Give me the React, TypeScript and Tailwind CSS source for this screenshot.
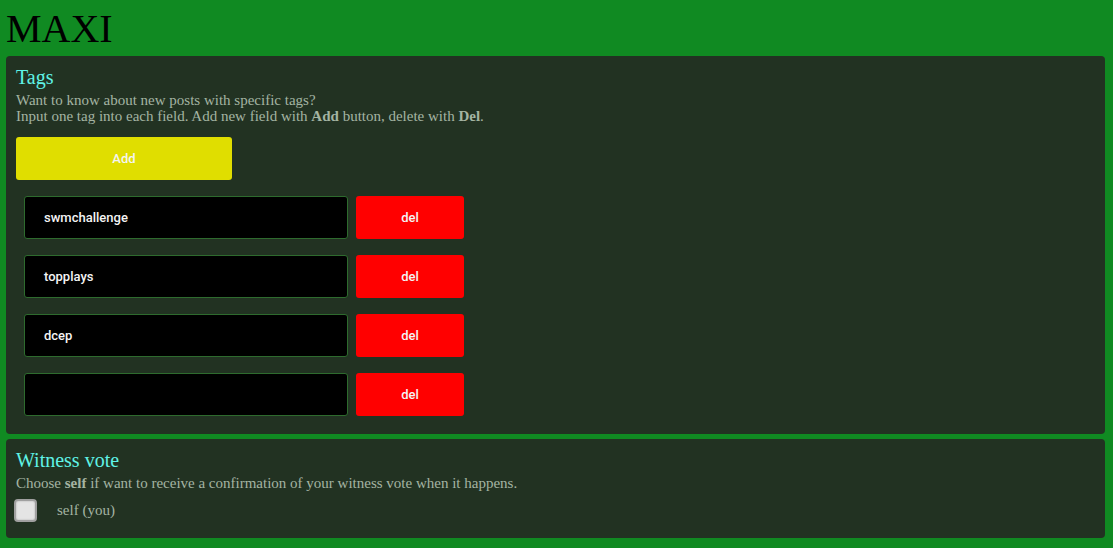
import React from "react";

const serif = { fontFamily: '"Liberation Serif", "Times New Roman", serif' };
const sans = { fontFamily: 'Roboto, "Liberation Sans", Arial, sans-serif' };

function TagRow({ value }: { value: string }) {
  return (
    <div className="flex gap-[8px] ml-[8px]">
      <div
        className="w-[324px] h-[43px] bg-black border border-[#2e6b2e] rounded-[3px] pl-[19px] flex items-center text-[#f4f4f4] text-[13px] font-medium"
        style={sans}
      >
        {value}
      </div>
      <div
        className="w-[108px] h-[43px] bg-[#ff0000] rounded-[3px] flex items-center justify-center text-[#f4f4f4] text-[13px] font-medium"
        style={sans}
      >
        del
      </div>
    </div>
  );
}

export default function App() {
  const tags = ["swmchallenge", "topplays", "dcep", ""];
  return (
    <div className="min-h-screen bg-[#108a22] pt-[6px] pb-[10px]" style={serif}>
      <h1 className="ml-[6px] text-[40px] leading-[45px] mb-[5px] text-black font-normal">MAXI</h1>
      <div className="ml-[6px] mr-[8px] bg-[#223222] rounded-[4px] pt-[10px] px-[10px] pb-[18px]">
        <div className="text-[20px] leading-[23px] text-[#5ff3e6]">Tags</div>
        <div className="mt-[3px] text-[15px] leading-[16px] text-[#a4b4a2]">
          <div>Want to know about new posts with specific tags?</div>
          <div>
            Input one tag into each field. Add new field with <b>Add</b> button, delete with <b>Del</b>.
          </div>
        </div>
        <div
          className="mt-[13px] w-[216px] h-[43px] bg-[#e0de00] rounded-[3px] flex items-center justify-center text-[#f4f4f4] text-[13px] font-medium"
          style={sans}
        >
          Add
        </div>
        <div className="mt-[16px] flex flex-col gap-[16px]">
          {tags.map((t, i) => (
            <TagRow key={i} value={t} />
          ))}
        </div>
      </div>
      <div className="mt-[5px] ml-[6px] mr-[8px] bg-[#223222] rounded-[4px] pt-[10px] px-[10px] pb-[16px]">
        <div className="text-[20px] leading-[23px] text-[#5ff3e6]">Witness vote</div>
        <div className="mt-[3px] text-[15px] leading-[16px] text-[#a4b4a2]">
          Choose <b>self</b> if want to receive a confirmation of your witness vote when it happens.
        </div>
        <div className="mt-[8px] flex items-center">
          <div className="-ml-[2px] w-[23px] h-[23px] rounded-[4px] bg-[#e4e4e4] border-2 border-[#a0a0a0] shadow-[inset_0_0_2px_rgba(0,0,0,0.25)]" />
          <span className="ml-[20px] text-[15px] text-[#a4b4a2]">self (you)</span>
        </div>
      </div>
    </div>
  );
}
